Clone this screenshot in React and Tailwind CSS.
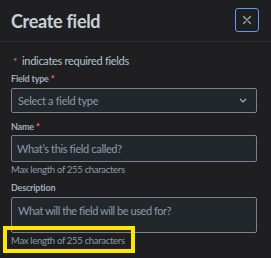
export default function App() {
  const font = { fontFamily: '"Lato", "Noto Sans", sans-serif' };
  const label = "block h-[12px] text-[9px] font-bold text-[#9fadbc] leading-[12px] tracking-[-0.2px]";
  const helper = "mt-[2px] h-[12px] text-[9.5px] text-[#8c9bab] leading-[12px] tracking-[-0.3px]";
  const box = "border border-[#7d818a] rounded-[2px] bg-[#22272b]";
  const ph = "text-[11px] leading-[14px] text-[#8c9bab]";
  return (
    <div className="relative w-[271px] h-[258px] bg-[#1f1f21] overflow-hidden leading-none" style={font}>
      <div className="flex items-center justify-between pl-[11px] pr-[12px] h-[42px] border-b border-[#2e2f33]">
        <h1 className="text-[18px] font-bold text-[#c7d1db] leading-[20px] tracking-[-0.3px] mt-[1px]">Create field</h1>
        <button className="w-[24px] h-[24px] rounded-[3px] border border-[#579dff] flex items-center justify-center text-[#9fadbc] mb-[2px]">
          <svg width="12" height="12" viewBox="0 0 12 12" fill="none" stroke="currentColor" strokeWidth="1.2" strokeLinecap="round">
            <path d="M2.5 2.5 L9.5 9.5 M9.5 2.5 L2.5 9.5" />
          </svg>
        </button>
      </div>
      <div className="pl-[11px] pr-[14px] pt-[12px] flex flex-col">
        <div className="h-[14px] flex items-center text-[11px] text-[#b6c2cf] leading-[14px] tracking-[-0.3px]">
          <span className="text-[#f87168] text-[10px] leading-[14px] w-[11px] pl-[2px]">*</span>
          <span>indicates required fields</span>
        </div>
        <label className={`mt-[5px] ${label}`}>
          Field type <span className="text-[#f87168]">*</span>
        </label>
        <div className={`mt-[3px] h-[25px] ${box} flex items-center justify-between pl-[6px] pr-[9px]`}>
          <span className={`${ph} tracking-[-0.3px]`}>Select a field type</span>
          <svg width="8" height="5" viewBox="0 0 8 5" fill="none" stroke="#9fadbc" strokeWidth="1.2">
            <path d="M1 1 L4 4 L7 1" />
          </svg>
        </div>
        <label className={`mt-[8px] ${label}`}>
          Name <span className="text-[#f87168]">*</span>
        </label>
        <div className={`mt-[2px] h-[27px] ${box} flex items-center pl-[5px]`}>
          <span className={`${ph} tracking-[-0.35px]`}>What’s this field called?</span>
        </div>
        <p className={helper}>Max length of 255 characters</p>
        <label className={`mt-[6px] ${label}`}>Description</label>
        <div className={`mt-[3px] h-[36px] ${box} pl-[6px] pt-[3px]`}>
          <span className={`${ph} tracking-[-0.45px]`}>What will the field will be used for?</span>
        </div>
        <p className={helper}>Max length of 255 characters</p>
      </div>
      <div className="absolute left-[3px] top-[226px] w-[132px] h-[27px] border-[4px] border-[#ffe600]" />
    </div>
  );
}
